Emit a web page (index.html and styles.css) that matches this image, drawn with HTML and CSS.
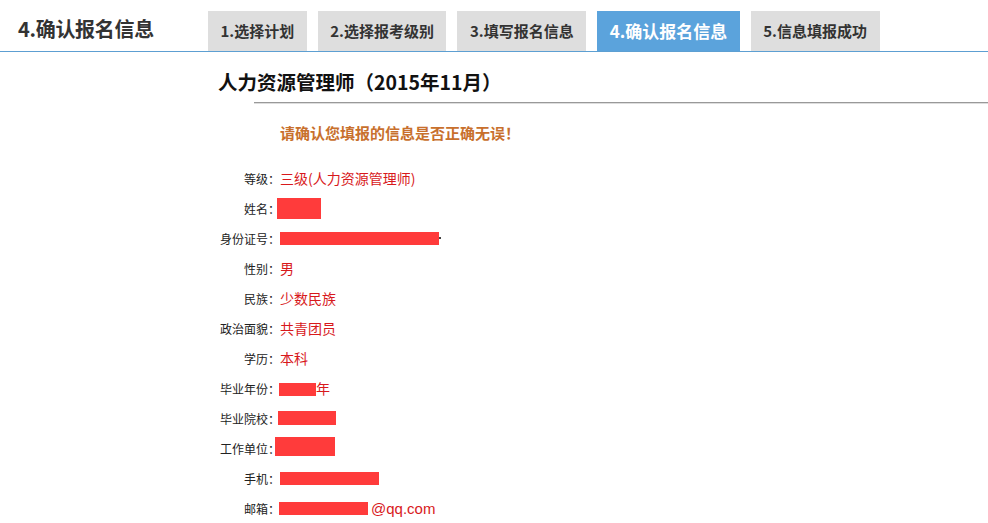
FILE: index.html
```html
<!DOCTYPE html>
<html lang="zh-CN">
<head>
<meta charset="utf-8">
<title>确认报名信息</title>
<link rel="stylesheet" href="styles.css">
</head>
<body>
<div class="header">
  <div class="page-title">4.确认报名信息</div>
  <div class="tabs">
    <div class="tab">1.选择计划</div>
    <div class="tab">2.选择报考级别</div>
    <div class="tab">3.填写报名信息</div>
    <div class="tab active">4.确认报名信息</div>
    <div class="tab">5.信息填报成功</div>
  </div>
</div>
<div class="content">
  <h2 class="plan-title">人力资源管理师（2015年11月）</h2>
  <div class="title-rule"></div>
  <p class="notice">请确认您填报的信息是否正确无误！</p>
  <div class="info">
    <div class="row"><span class="label">等级：</span><span class="value">三级(人力资源管理师)</span></div>
    <div class="row"><span class="label">姓名：</span><span class="value"><span class="mask m-name"></span></span></div>
    <div class="row"><span class="label">身份证号：</span><span class="value"><span class="mask m-id"></span><span class="dot"></span></span></div>
    <div class="row"><span class="label">性别：</span><span class="value">男</span></div>
    <div class="row"><span class="label">民族：</span><span class="value">少数民族</span></div>
    <div class="row"><span class="label">政治面貌：</span><span class="value">共青团员</span></div>
    <div class="row"><span class="label">学历：</span><span class="value">本科</span></div>
    <div class="row"><span class="label">毕业年份：</span><span class="value"><span class="mask m-year"></span>年</span></div>
    <div class="row"><span class="label">毕业院校：</span><span class="value"><span class="mask m-school"></span></span></div>
    <div class="row"><span class="label">工作单位：</span><span class="value"><span class="mask m-work"></span></span></div>
    <div class="row"><span class="label">手机：</span><span class="value"><span class="mask m-phone"></span></span></div>
    <div class="row"><span class="label">邮箱：</span><span class="value"><span class="mask m-mail"></span><span class="latin">@qq.com</span></span></div>
  </div>
</div>
</body>
</html>
```

FILE: styles.css
```css
* { box-sizing: border-box; }
html, body { margin: 0; padding: 0; background: #fff; }
body {
  font-family: "Noto Sans CJK SC", "Noto Sans", sans-serif;
  color: #222;
  width: 988px;
  height: 523px;
  overflow: hidden;
}
.header {
  display: flex;
  align-items: flex-end;
  height: 52px;
  padding-top: 11px;
  border-bottom: 1px solid #5d9fd2;
}
.page-title {
  width: 208px;
  padding-left: 18px;
  padding-bottom: 3px;
  font-size: 20px;
  font-weight: bold;
  line-height: 38px;
  color: #333;
  letter-spacing: -0.3px;
}
.tabs {
  display: flex;
  gap: 11px;
}
.tab {
  height: 40px;
  line-height: 40px;
  padding: 0 12.5px;
  background: #dedede;
  color: #333;
  font-size: 15px;
  font-weight: bold;
  white-space: nowrap;
}
.tab.active {
  padding: 0 12.5px;
  background: #5ba3dc;
  color: #fff;
  font-size: 17px;
}
.content {
  padding-left: 218px;
}
.plan-title {
  margin: 18px 0 0;
  font-size: 19.5px;
  line-height: 24px;
  font-weight: bold;
  color: #111;
}
.title-rule {
  margin: 8px 0 0 36px;
  border-top: 1px solid #999;
  border-bottom: 1px solid #ddd;
}
.notice {
  margin: 19px 0 0 62px;
  font-size: 15px;
  line-height: 20px;
  font-weight: bold;
  color: #c8702d;
}
.info {
  margin-top: 20px;
}
.row {
  display: flex;
  align-items: center;
  height: 30px;
}
.label {
  width: 62px;
  text-align: right;
  font-size: 12px;
  color: #222;
  white-space: nowrap;
}
.value {
  display: flex;
  align-items: center;
  font-size: 14px;
  color: #d8191c;
  white-space: nowrap;
}
.latin {
  font-family: "Liberation Sans", Arial, sans-serif;
  font-size: 15px;
  margin-left: 3px;
}
.mask {
  display: inline-block;
  background: #ff3b3b;
}
.m-name { width: 44px; height: 21px; margin-left: -3px; }
.m-id { width: 159px; height: 13px; margin-top: 1px; }
.m-year { width: 37px; height: 13px; margin-left: -1px; margin-top: 3px; }
.m-school { width: 58px; height: 14px; margin-left: -2px; }
.m-work { width: 60px; height: 19px; margin-left: -5px; margin-top: -3px; }
.m-phone { width: 99px; height: 13px; margin-top: 1px; }
.m-mail { width: 89px; height: 13px; margin-left: -1px; margin-top: 1px; }
.dot { display: inline-block; width: 2px; height: 2px; background: #444; align-self: flex-end; margin-bottom: 6px; }
```
